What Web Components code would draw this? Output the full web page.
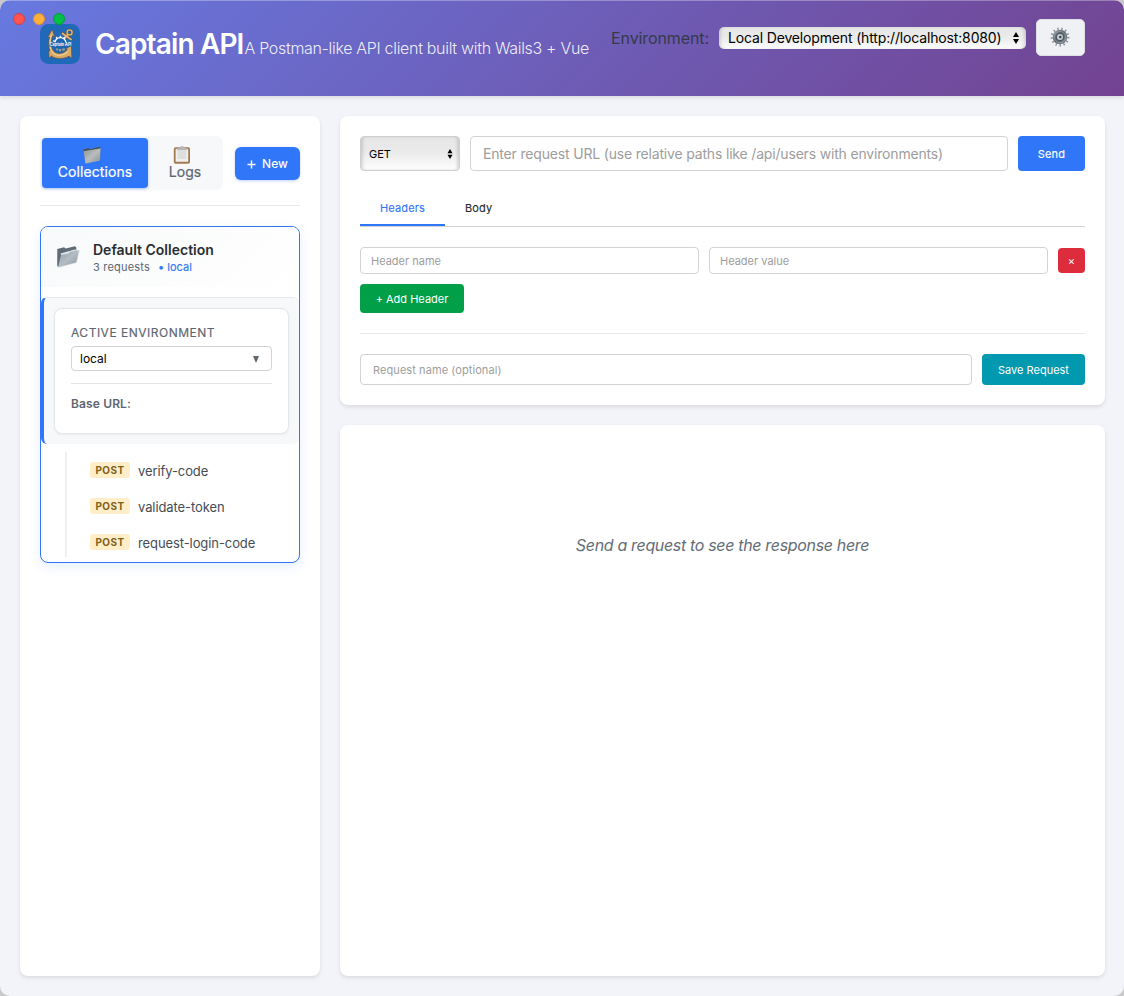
<!DOCTYPE html>
<html lang="en">
<head>
<meta charset="utf-8">
<title>Captain API</title>
<style>
html, body { margin: 0; height: 100%; background: #c9c9cb; overflow: hidden; }
body { font-family: Inter, "Liberation Sans", sans-serif; color: #24292e; }
</style>
</head>
<body>
<captain-app></captain-app>
<script>
function define(name, html) {
  const tpl = document.createElement('template');
  tpl.innerHTML = html;
  customElements.define(name, class extends HTMLElement {
    constructor() {
      super();
      this.attachShadow({ mode: 'open' }).append(tpl.content.cloneNode(true));
    }
  });
}

define('ui-panel', `
<style>
:host { display: block; box-sizing: border-box; background: #fff; border-radius: 8px; padding: 20px; box-shadow: 0 2px 4px rgba(0,0,0,.1); }
</style><slot></slot>`);

define('ui-button', `
<style>
:host { display: flex; align-items: center; justify-content: center; box-sizing: border-box; border-radius: 4px; background: var(--bg, #3076f8); color: #fff; font-size: 11px; white-space: nowrap; flex: none; }
</style><slot></slot>`);

define('ui-field', `
<style>
:host { display: flex; align-items: center; box-sizing: border-box; border: 1px solid #d3d3d4; border-radius: 4px; background: #fff; color: #9d9d9d; white-space: nowrap; }
</style><slot></slot>`);

define('mac-select', `
<style>
:host { display: flex; align-items: center; justify-content: space-between; box-sizing: border-box; color: #000; white-space: nowrap;
  background: linear-gradient(#e6e6e6, #eaeaea 45%, #fdfdfd); box-shadow: inset 3px 0 3px -1px rgba(0,0,0,.13), inset -3px 0 3px -1px rgba(0,0,0,.13); }
span { margin-top: var(--lift, 0); }
svg { flex: none; display: block; }
</style>
<span><slot></slot></span>
<svg part="arrows" width="6" height="12" viewBox="0 0 6 12"><path d="M0 5 3 0 6 5zM0 7 3 12 6 7z"/></svg>`);

define('window-lights', `
<style>
:host { display: flex; gap: 8px; }
i { width: 12px; height: 12px; border-radius: 50%; box-sizing: border-box; border: 1px solid #d94047; background: #ff5450; }
i:nth-of-type(2) { border-color: #d8923d; background: #ffb03a; }
i:nth-of-type(3) { border-color: #079a3a; background: #00c048; }
</style><i></i><i></i><i></i>`);

define('captain-logo', `
<style>
:host { display: block; width: 40px; height: 40px; flex: none; }
svg { display: block; }
text { font: 700 4.3px Inter, sans-serif; fill: #fff; }
</style>
<svg width="40" height="40" viewBox="0 0 40 40">
  <defs><linearGradient id="g" x1="0" y1="0" x2="1" y2="1"><stop offset="0" stop-color="#f4d398"/><stop offset=".5" stop-color="#c99249"/><stop offset="1" stop-color="#efc683"/></linearGradient></defs>
  <rect width="40" height="40" rx="8.5" fill="#2069b8"/>
  <g fill="none" stroke="#5d4c3c" stroke-linecap="round">
    <circle cx="29.600" cy="8.400" r="2.500" stroke-width="2.200"/>
    <path d="M27.800 10.600 21.500 18M22.500 9.400l8.600 6" stroke-width="2.800"/>
  </g>
  <g fill="none" stroke="#e2b673" stroke-linecap="round">
    <circle cx="29.600" cy="8.400" r="2.500" stroke-width="1.400"/>
    <path d="M27.800 10.600 21.500 18M22.500 9.400l8.600 6" stroke-width="1.800"/>
  </g>
  <path d="M7.400 14.200 12 5.600 14.800 12.400 12.700 11.800C10.500 17 10.600 24 14 27.500c4 3.400 10 2.200 13.300-2L25.600 25l5.800-3.600.4 13-2.600-2.200C23.500 35 16 35.600 11.400 32L9 34.200 8.800 26.400 10 27C8.200 22.500 8.300 17 9.800 13z" fill="#dba963" stroke="#5d4c3c" stroke-width=".6"/>
  <path d="M11.300 11C9.200 17 9.200 25 13 29c4.500 4 11.500 2.400 15.500-2" fill="none" stroke="#f5d9a5" stroke-width=".9"/>
  <circle cx="20.500" cy="21" r="7" fill="#1c66b0"/>
  <path d="M15 18.600a5.400 5 0 0 1 10.800 0" fill="none" stroke="#fff" stroke-width="1.300"/>
  <path d="M15 17.600l-1.800-1M17.200 14.600l-1-1.600M20.400 13.600v-1.800M23.600 14.600l1.200-1.500" stroke="#f5f9fc" stroke-width="1.600"/>
  <path d="M15.600 24.400h2.600v2h-1.600zM19 25h2.200v2.200h-2.200zM22.200 24.400h3.200l-1.200 2.400h-1.800z" fill="#a79a8b"/>
  <path d="M9.800 18.800h21.400l.4 3.800H9.200z" fill="#1f64ae"/>
  <text x="9.800" y="22.200" textLength="21.600" lengthAdjust="spacingAndGlyphs">Captain API</text>
</svg>`);

define('gear-icon', `
<style>:host { display: block; } svg { display: block; }</style>
<svg width="20" height="20" viewBox="-10 -10 20 20">
  <defs><linearGradient id="m" x1="0" y1="0" x2="1" y2="1"><stop offset="0" stop-color="#a4abb0"/><stop offset=".45" stop-color="#5a646c"/><stop offset="1" stop-color="#8c969d"/></linearGradient></defs>
  <circle r="8.300" fill="none" stroke="#8a9399" stroke-width="2.400" stroke-dasharray="1.400 2.611"/>
  <circle r="7.300" fill="url(#m)"/>
  <circle r="5.600" fill="none" stroke="#8f999f" stroke-width=".8"/>
  <circle r="4.400" fill="#4d5860"/>
  <circle r="3" fill="#c4ced2"/>
  <circle r="1.200" cx=".3" fill="#2c3b43"/>
</svg>`);

define('folder-icon', `
<style>:host { display: block; } svg { display: block; }</style>
<svg width="18" height="18" viewBox="0 0 18 18">
  <defs><linearGradient id="f" x1="0" y1="0" x2="1" y2="1"><stop offset="0" stop-color="#8d9394"/><stop offset=".5" stop-color="#b9bdbd"/><stop offset="1" stop-color="#878d8f"/></linearGradient></defs>
  <path d="M.6 3.200 5.500 2l1.400 1.200 9.700-2.400.8 1-.3 12.200L2.400 17.500z" fill="#4b5355"/>
  <path d="M1.200 5.600 17.300 2.800 16.500 14.200 2.600 17.300z" fill="url(#f)" stroke="#c3c8c9" stroke-width=".5"/>
</svg>`);

define('open-folder-icon', `
<style>:host { display: block; } svg { display: block; }</style>
<svg width="24" height="24" viewBox="0 0 24 24">
  <defs><linearGradient id="o" x1="0" y1="0" x2="1" y2="1"><stop offset="0" stop-color="#8e9aa3"/><stop offset=".5" stop-color="#b4bdc4"/><stop offset="1" stop-color="#84909a"/></linearGradient></defs>
  <path d="M1.300 4 8 2.200l1.700 1.200L19 1.300l1.300 1.200V15L2.400 22 1.200 21z" fill="#5f6c76"/>
  <path d="M4.400 8.600 19.600 4.200l.2 2.600-14 4z" fill="#dfe4e7"/>
  <path d="M2.400 22.300 5.500 9.800 12.600 8.400l1.200-1.600 9.400-1.600L20.400 17.500z" fill="url(#o)" stroke="#ccd3d8" stroke-width=".5"/>
</svg>`);

define('clipboard-icon', `
<style>:host { display: block; } svg { display: block; }</style>
<svg width="18" height="18" viewBox="0 0 18 18">
  <rect x=".8" y="1.200" width="16.200" height="16.600" rx="1.800" fill="#a27a51"/>
  <path d="M2.600 3h12.600v12.700H2.600z" fill="#efefed"/>
  <path d="M4.500 6h8.800M4.500 8h8.800M4.500 10h8.800M4.500 12h8.800" stroke="#cdcecf" stroke-width="1"/>
  <path d="M4 4.200V2.400h2.800C7 .8 7.800 0 9 0s2 .8 2.200 2.400H14v1.800z" fill="#b3b7b9" stroke="#d2d5d6" stroke-width=".4"/>
</svg>`);

define('app-header', `
<style>
:host { display: flex; box-sizing: border-box; height: 96px; padding: 19px 39px 0 40px; align-items: flex-start; background: linear-gradient(135deg, #6779e0, #734391); box-shadow: inset 0 1px 0 rgba(255,255,255,.3), 0 2px 4px rgba(0,0,0,.1); position: relative; white-space: nowrap; }
window-lights { position: absolute; left: 13px; top: 13px; }
captain-logo { margin-top: 5px; }
h1 { margin: 5px 0 0 15px; width: 149.500px; font-size: 28px; font-weight: 600; letter-spacing: -.862px; line-height: 41px; color: #fff; }
.sub { margin-top: 19px; font-size: 16px; font-weight: 300; letter-spacing: -.311px; line-height: 20px; color: rgba(255,255,255,.9); }
.env { margin-left: auto; margin-right: 10px; font-size: 16px; letter-spacing: -.096px; line-height: 38px; color: #353a4b; }
mac-select { width: 307px; height: 22px; margin-top: 8px; padding: 0 7px 0 9px; border-radius: 5px; font-size: 14px; letter-spacing: -.155px; --lift: -2px; }
.gear { width: 49px; height: 37px; margin-left: 10px; box-sizing: border-box; padding: 0 2px 2px 0; border: 1px solid #dcdfe4; border-radius: 5px; background: #f0f1f4; display: grid; place-items: center; }
</style>
<captain-logo></captain-logo>
<h1>Captain API</h1>
<span class="sub">A Postman-like API client built with Wails3 + Vue</span>
<span class="env">Environment:</span>
<mac-select>Local Development (http://localhost:8080)</mac-select>
<div class="gear"><gear-icon></gear-icon></div>
<window-lights></window-lights>`);

define('side-tab', `
<style>
:host { display: flex; flex-direction: column; align-items: center; box-sizing: border-box; height: 50px; padding-top: 8px; border-radius: 4px; font-size: 14px; font-weight: 400; color: #5d666f; }
:host([active]) { background: #3076f8; color: #fff; box-shadow: 0 1px 3px rgba(0,80,220,.3); }
::slotted([slot=icon]) { margin-right: 6px; }
.label { margin-top: -1px; line-height: 17px; letter-spacing: .083px; -webkit-text-stroke: .2px; }
</style>
<slot name="icon"></slot><span class="label"><slot></slot></span>`);

define('request-item', `
<style>
:host { display: flex; align-items: center; height: 36px; font-size: 13px; letter-spacing: -.09px; color: #454c53; }
b { width: 40px; height: 16px; margin-right: 8px; border-radius: 3px; background: #ffeec7; color: #80601b; font-size: 10px; font-weight: 700; line-height: 17px; letter-spacing: .4px; text-align: center; }
span { margin-top: 1px; }
</style><b>POST</b><span><slot></slot></span>`);

define('environment-card', `
<style>
:host { display: block; box-sizing: border-box; height: 147px; padding: 10px 10px 0; border-left: 3px solid #3076f8; border-top: 1px solid #e5e8eb; border-radius: 6px; background: #f7f8fa; }
.card { box-sizing: border-box; height: 126px; padding: 15px 16px; border: 1px solid #e4e7ea; border-radius: 8px; background: #fff; box-shadow: 0 1px 3px rgba(0,0,0,.05); font-size: 12px; color: #5d666f; }
.label { font-weight: 400; -webkit-text-stroke: .15px; letter-spacing: .5px; line-height: 18px; }
ui-field { height: 25px; margin-top: 4px; padding: 0 12px 0 8px; justify-content: space-between; border-radius: 4px; color: #000; }
svg { display: block; margin-top: 1px; }
.base { margin-top: 12px; padding-top: 11px; border-top: 1px solid #e2e5e8; font-weight: 600; letter-spacing: .135px; line-height: 18px; }
</style>
<div class="card">
  <div class="label">ACTIVE ENVIRONMENT</div>
  <ui-field><span>local</span><svg width="6" height="7" viewBox="0 0 6 7"><path d="M0 0h6L3 7z" fill="#5d666f"/></svg></ui-field>
  <div class="base">Base URL:</div>
</div>`);

define('collection-card', `
<style>
:host { display: block; box-sizing: border-box; height: 337px; border: 1px solid #3076f8; border-radius: 8px; background: #fff; box-shadow: 0 4px 12px rgba(48,118,248,.12); overflow: hidden; }
header { display: flex; height: 60px; margin-bottom: 10px; padding-left: 15px; background: linear-gradient(135deg, #f8f9fa, #fff); }
open-folder-icon { margin-top: 18px; }
.text { margin-left: 13px; padding-top: 14px; }
h2 { margin: 0; font-size: 14px; font-weight: 600; line-height: 18px; color: #2a2e32; }
p { display: flex; gap: 8px; margin: 0; font-size: 11px; line-height: 16px; color: #5d666f; letter-spacing: .2px; }
p span { color: #3076f8; font-weight: 400; -webkit-text-stroke: .15px; letter-spacing: 0; }
.list { height: 105px; margin: 9px 0 0 24px; padding-left: 23px; border-left: 2px solid #edeff1; box-sizing: border-box; }
.list request-item:first-child { margin-top: -1px; }
</style>
<header><open-folder-icon></open-folder-icon><div class="text"><h2>Default Collection</h2><p>3 requests<span>• local</span></p></div></header>
<environment-card></environment-card>
<div class="list"><request-item>verify-code</request-item><request-item>validate-token</request-item><request-item>request-login-code</request-item></div>`);

define('app-sidebar', `
<style>
:host { display: block; }
ui-panel { height: 100%; }
.top { display: flex; align-items: center; justify-content: space-between; height: 54px; padding-bottom: 15px; margin-bottom: 20px; border-bottom: 1px solid #e5e7e9; }
.tabs { display: flex; box-sizing: border-box; width: 183px; height: 54px; padding: 2px; background: #f7f8fa; border-radius: 6px; }
.tabs side-tab:first-child { width: 106px; }
.tabs side-tab:last-child { flex: 1; padding-left: 1px; }
ui-button { width: 65px; height: 33px; border-radius: 6px; font-size: 12px; letter-spacing: .1px; -webkit-text-stroke: .15px; gap: 6px; box-shadow: 0 1px 3px rgba(0,80,220,.25); }
svg { margin-top: 2px; }
</style>
<ui-panel>
  <div class="top">
    <div class="tabs">
      <side-tab active><folder-icon slot="icon"></folder-icon>Collections</side-tab>
      <side-tab><clipboard-icon slot="icon"></clipboard-icon>Logs</side-tab>
    </div>
    <ui-button><svg width="9" height="9" viewBox="0 0 9 9"><path d="M4.500.5v8M.5 4.500h8" stroke="#fff" stroke-width="1.500"/></svg>New</ui-button>
  </div>
  <collection-card></collection-card>
</ui-panel>`);

define('request-editor', `
<style>
:host { display: block; }
ui-panel { height: 289px; }
.row { display: flex; gap: 10px; }
mac-select { width: 100px; height: 35px; padding: 0 6px 0 8px; border: 1px solid #cfcfcf; border-radius: 4px; font-size: 11px; }
mac-select::part(arrows) { height: 10px; }
.url { flex: 1; padding-left: 12px; font-size: 14px; letter-spacing: -.177px; }
.send { width: 67px; height: 35px; letter-spacing: .2px; -webkit-text-stroke: .15px; }
.tabs { display: flex; height: 35px; margin-top: 20px; border-bottom: 1px solid #d3d3d4; font-size: 11px; line-height: 34px; letter-spacing: .1px; }
.tabs span { padding: 0 20px; height: 33px; -webkit-text-stroke: .1px; }
.tabs .on { box-sizing: border-box; width: 85px; height: 35px; color: #3076f8; letter-spacing: .15px; border-bottom: 2px solid #3076f8; }
.head { margin-top: 20px; align-items: center; }
.head ui-field { flex: 1; height: 27px; padding-left: 10px; font-size: 11px; }
.del { width: 27px; height: 25px; --bg: #dd2c3c; }
.add { width: 104px; height: 29px; margin-top: 10px; --bg: #009f48; }
.save { margin-top: 20px; padding-top: 20px; border-top: 1px solid #e5e7e9; }
.save ui-field { flex: 1; height: 31px; padding-left: 12px; font-size: 11px; letter-spacing: .077px; }
.save ui-button { width: 103px; height: 31px; --bg: #0099b0; }
</style>
<ui-panel>
  <div class="row"><mac-select>GET</mac-select><ui-field class="url">Enter request URL (use relative paths like /api/users with environments)</ui-field><ui-button class="send">Send</ui-button></div>
  <div class="tabs"><span class="on">Headers</span><span>Body</span></div>
  <div class="row head"><ui-field>Header name</ui-field><ui-field>Header value</ui-field><ui-button class="del">×</ui-button></div>
  <ui-button class="add">+ Add Header</ui-button>
  <div class="row save"><ui-field>Request name (optional)</ui-field><ui-button>Save Request</ui-button></div>
</ui-panel>`);

define('response-view', `
<style>
:host { display: block; }
ui-panel { height: 100%; padding-top: 110px; text-align: center; font-size: 16px; font-style: italic; letter-spacing: -.333px; line-height: 20px; color: #646d76; }
</style>
<ui-panel>Send a request to see the response here</ui-panel>`);

define('captain-app', `
<style>
:host { display: flex; flex-direction: column; width: 1124px; height: 996px; border-radius: 10px; overflow: hidden; background: #f3f4f9; }
main { flex: 1; display: grid; grid-template-columns: 300px 1fr; gap: 20px; padding: 20px 19px 20px 20px; }
.right { display: flex; flex-direction: column; gap: 20px; }
response-view { flex: 1; }
</style>
<app-header></app-header>
<main><app-sidebar></app-sidebar><div class="right"><request-editor></request-editor><response-view></response-view></div></main>`);
</script>
</body>
</html>
